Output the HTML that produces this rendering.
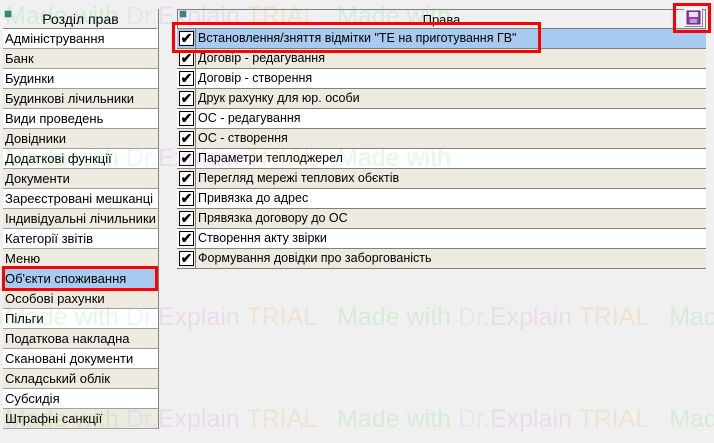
<!DOCTYPE html>
<html><head><meta charset="utf-8"><style>
body{margin:0;width:714px;height:443px;background:#f0f0f0;position:relative;overflow:hidden;font-family:"Liberation Sans",Arial,sans-serif;font-size:13px;color:#000}
.a{position:absolute}
.lrow{position:absolute;left:3px;width:153px;height:19px;border-bottom:1px solid #a0a0a0;line-height:19px;padding-left:2px;box-sizing:content-box;white-space:nowrap}
.rrow{position:absolute;left:177px;width:529px;height:19px;border-bottom:1px solid #808080;line-height:19px;white-space:nowrap;font-size:12.5px}
.cb{position:absolute;left:2px;top:2px;width:13px;height:13px;border:1px solid #000;background:#fff;font-size:14px;line-height:13px;text-align:center;font-weight:bold}
.cbcol{position:absolute;left:0;top:0;width:18px;height:19px;border-right:1px solid #808080}
.txt{position:absolute;left:21px;top:0}
.w{background:#fff}.b{background:#eeeae0}.s{background:#a6caf0}
.red{position:absolute;border:3px solid #f00;box-sizing:border-box;z-index:5}
.wm{position:absolute;font-size:25px;white-space:nowrap;opacity:.13;left:0;z-index:3;pointer-events:none}
</style></head><body>
<div class="wm" style="top:2px;left:5px"><span style="color:#2c2">Made with </span><span style="color:#8af">Dr.</span><span style="color:#d4d">Explain </span><span style="color:#f80">TRIAL</span> &nbsp; <span style="color:#2c2">Made with</span></div>
<div class="wm" style="top:144px;left:5px"><span style="color:#2c2">Made with </span><span style="color:#8af">Dr.</span><span style="color:#d4d">Explain </span><span style="color:#f80">TRIAL</span> &nbsp; <span style="color:#2c2">Made with</span></div>
<div class="wm" style="top:303px;left:5px"><span style="color:#2c2">Made with </span><span style="color:#8af">Dr.</span><span style="color:#d4d">Explain </span><span style="color:#f80">TRIAL</span> &nbsp; <span style="color:#2c2">Made with </span><span style="color:#8af">Dr.</span><span style="color:#d4d">Explain </span><span style="color:#f80">TRIAL</span> &nbsp; <span style="color:#2c2">Made with</span></div>
<div class="wm" style="top:405px;left:5px"><span style="color:#2c2">Made with </span><span style="color:#8af">Dr.</span><span style="color:#d4d">Explain </span><span style="color:#f80">TRIAL</span> &nbsp; <span style="color:#2c2">Made with </span><span style="color:#8af">Dr.</span><span style="color:#d4d">Explain </span><span style="color:#f80">TRIAL</span> &nbsp; <span style="color:#2c2">Made with</span></div>

<!-- left -->
<div class="a" style="left:4px;top:10px;width:6px;height:6px;background:#2a8a7a;border:1px solid #ccc"></div>
<div class="a" style="left:3px;top:9px;width:155px;height:420px;border-right:1px solid #808080"></div>
<div class="a" style="left:3px;top:9px;width:155px;height:20px;line-height:20px;text-align:center;font-size:14px">Розділ прав</div>
<div class="a" style="left:3px;top:28px;width:154px;height:1px;background:#808080"></div>
<div class="lrow w" style="top:29px">Адміністрування</div>
<div class="lrow b" style="top:49px">Банк</div>
<div class="lrow w" style="top:69px">Будинки</div>
<div class="lrow b" style="top:89px">Будинкові лічильники</div>
<div class="lrow w" style="top:109px">Види проведень</div>
<div class="lrow b" style="top:129px">Довідники</div>
<div class="lrow w" style="top:149px">Додаткові функції</div>
<div class="lrow b" style="top:169px">Документи</div>
<div class="lrow w" style="top:189px">Зареєстровані мешканці</div>
<div class="lrow b" style="top:209px">Індивідуальні лічильники</div>
<div class="lrow w" style="top:229px">Категорії звітів</div>
<div class="lrow b" style="top:249px">Меню</div>
<div class="lrow s" style="top:269px">Об'єкти споживання</div>
<div class="lrow b" style="top:289px">Особові рахунки</div>
<div class="lrow w" style="top:309px">Пільги</div>
<div class="lrow b" style="top:329px">Податкова накладна</div>
<div class="lrow w" style="top:349px">Скановані документи</div>
<div class="lrow b" style="top:369px">Складський облік</div>
<div class="lrow w" style="top:389px">Субсидія</div>
<div class="lrow b" style="top:409px">Штрафні санкції</div>
<div class="red" style="left:2px;top:266px;width:156px;height:25px"></div>

<!-- right -->
<div class="a" style="left:179px;top:10px;width:6px;height:6px;background:#2a8a7a;border:1px solid #ccc"></div>
<div class="a" style="left:177px;top:9px;width:529px;height:260px;border-top:1px solid #808080;border-right:1px solid #808080;border-left:1px solid #808080;box-sizing:border-box"></div>
<div class="a" style="left:177px;top:10px;width:529px;height:19px;line-height:19px;text-align:center;font-size:13px">Права</div>
<div class="a" style="left:177px;top:28px;width:529px;height:1px;background:#808080"></div>
<div class="rrow s" style="top:29px"><div class="cbcol"></div><div class="cb">✔</div><div class="txt">Встановлення/зняття відмітки "ТЕ на приготування ГВ"</div></div>
<div class="rrow b" style="top:49px"><div class="cbcol"></div><div class="cb">✔</div><div class="txt">Договір - редагування</div></div>
<div class="rrow w" style="top:69px"><div class="cbcol"></div><div class="cb">✔</div><div class="txt">Договір - створення</div></div>
<div class="rrow b" style="top:89px"><div class="cbcol"></div><div class="cb">✔</div><div class="txt">Друк рахунку для юр. особи</div></div>
<div class="rrow w" style="top:109px"><div class="cbcol"></div><div class="cb">✔</div><div class="txt">ОС - редагування</div></div>
<div class="rrow b" style="top:129px"><div class="cbcol"></div><div class="cb">✔</div><div class="txt">ОС - створення</div></div>
<div class="rrow w" style="top:149px"><div class="cbcol"></div><div class="cb">✔</div><div class="txt">Параметри теплоджерел</div></div>
<div class="rrow b" style="top:169px"><div class="cbcol"></div><div class="cb">✔</div><div class="txt">Перегляд мережі теплових обєктів</div></div>
<div class="rrow w" style="top:189px"><div class="cbcol"></div><div class="cb">✔</div><div class="txt">Привязка до адрес</div></div>
<div class="rrow b" style="top:209px"><div class="cbcol"></div><div class="cb">✔</div><div class="txt">Прявязка договору до ОС</div></div>
<div class="rrow w" style="top:229px"><div class="cbcol"></div><div class="cb">✔</div><div class="txt">Створення акту звірки</div></div>
<div class="rrow b" style="top:249px"><div class="cbcol"></div><div class="cb">✔</div><div class="txt">Формування довідки про заборгованість</div></div>
<div class="red" style="left:172px;top:22px;width:369px;height:31px"></div>

<!-- save button -->
<div class="a" style="left:684px;top:8px;width:19px;height:19px;background:#f4f4f4;border:1px solid #fff;border-right-color:#888;border-bottom-color:#888;box-sizing:border-box"></div>
<svg class="a" style="left:686px;top:10px" width="15" height="15" viewBox="0 0 15 15"><rect x="1" y="1" width="13" height="13" fill="#9040b0" stroke="#602080"/><rect x="3" y="2" width="9" height="5" fill="#e8e0f0"/><rect x="4" y="9" width="7" height="4" fill="#c0a0d0"/></svg>
<div class="red" style="left:673px;top:3px;width:38px;height:30px"></div>
</body></html>
